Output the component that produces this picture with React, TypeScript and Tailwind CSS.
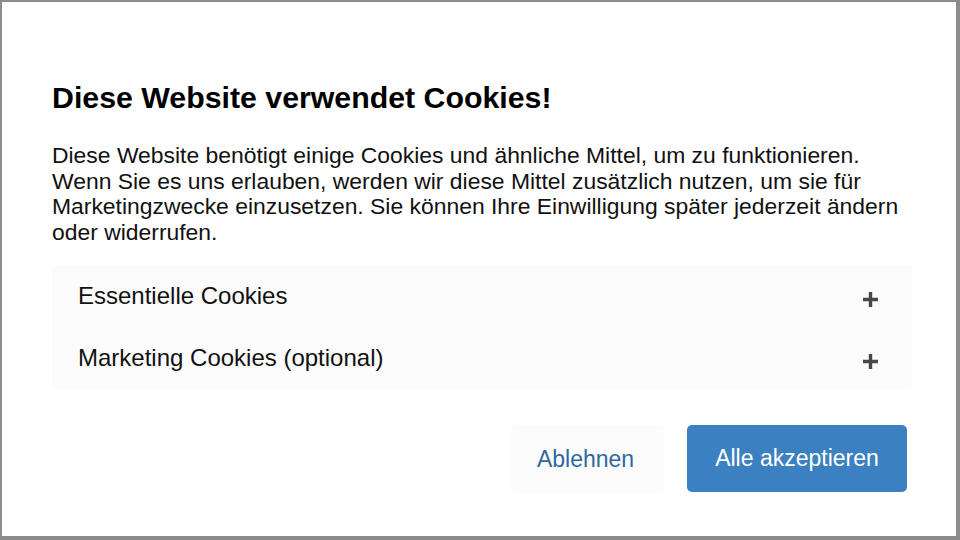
const font = { fontFamily: '"Liberation Sans", Arial, sans-serif' };

function PlusIcon() {
  return (
    <svg width="17" height="17" viewBox="0 0 17 17" className="mt-[7px] shrink-0">
      <path d="M8.5 1v15M1 8.5h15" stroke="#474747" strokeWidth="3.4" />
    </svg>
  );
}

function Row({ label }: { label: string }) {
  return (
    <div className="flex h-[62px] items-center justify-between pl-[26px] pr-[33px]">
      <span className="text-[24px] text-[#111]">{label}</span>
      <PlusIcon />
    </div>
  );
}

export default function App() {
  return (
    <div
      className="h-[540px] w-[960px] overflow-hidden border-t-2 border-l-2 border-r-4 border-b-4 border-[#8c8c8c] bg-white"
      style={font}
    >
      <div className="px-[50px] pt-[78px]">
        <h1 className="text-[30.3px] font-bold leading-[36px] text-black">
          Diese Website verwendet Cookies!
        </h1>
        <p className="mt-[27px] w-[870px] text-[22.9px] leading-[25.5px] text-[#111]">
          Diese Website benötigt einige Cookies und ähnliche Mittel, um zu funktionieren.
          <br />
          Wenn Sie es uns erlauben, werden wir diese Mittel zusätzlich nutzen, um sie für
          <br />
          Marketingzwecke einzusetzen. Sie können Ihre Einwilligung später jederzeit ändern
          <br />
          oder widerrufen.
        </p>
        <div className="mt-[20px] w-[860px] rounded bg-[#fbfbfb]">
          <Row label="Essentielle Cookies" />
          <Row label="Marketing Cookies (optional)" />
        </div>
        <div className="mt-[36px] flex w-[855px] justify-end gap-[22px]">
          <button className="h-[68px] w-[155px] rounded-md bg-[#fcfcfc] pr-[4px] text-[23px] text-[#2f69a0]">
            Ablehnen
          </button>
          <button className="h-[67px] w-[220px] rounded-[5px] bg-[#3b80c0] text-[23px] text-white">
            Alle akzeptieren
          </button>
        </div>
      </div>
    </div>
  );
}
